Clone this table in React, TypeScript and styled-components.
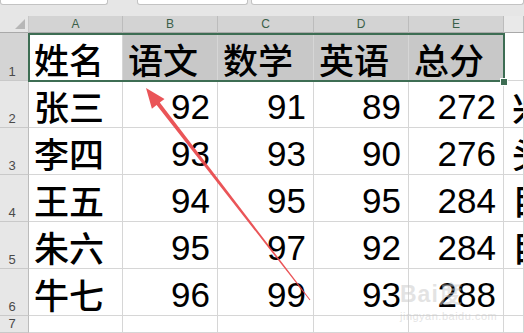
import React from "react";
import styled, { createGlobalStyle, css } from "styled-components";

const Global = createGlobalStyle`
  html, body { margin: 0; padding: 0; background: #ffffff; overflow: hidden; }
  #root { width: 524px; height: 333px; }
`;

const Page = styled.div`
  position: relative;
  width: 524px;
  height: 333px;
  overflow: hidden;
  display: flex;
  flex-direction: column;
  background: #ffffff;
`;

const TopStrip = styled.div`
  height: 16px;
  flex: none;
  background: #e6e6e6;
  display: flex;
  align-items: flex-start;
`;

const Field = styled.div<{ $w?: number; $ml?: number }>`
  height: 4px;
  width: ${(p) => (p.$w ? `${p.$w}px` : "auto")};
  flex: ${(p) => (p.$w ? "none" : "1")};
  margin-left: ${(p) => p.$ml ?? 0}px;
  background: #ffffff;
  border: 1px solid #c3c3c3;
  border-top: none;
  border-radius: 0 0 3px 3px;
`;

const Sheet = styled.div`
  position: relative;
  flex: 1;
  display: grid;
  grid-template-columns: 29px 94px 95px 96px 95px 95px 1fr;
  grid-template-rows: 17px 48px repeat(5, 47px) 1fr;
`;

const Corner = styled.div`
  background: #e6e6e6;
  border-right: 1px solid #c8c8c8;
  border-bottom: 1px solid #a9a9a9;
  display: flex;
  justify-content: flex-end;
  align-items: flex-end;
  padding: 0 3px 3px 0;
`;

const Triangle = styled.span`
  width: 0;
  height: 0;
  border-left: 10px solid transparent;
  border-bottom: 10px solid #b7b7b7;
`;

const ColHeader = styled.div<{ $sel?: boolean }>`
  background: ${(p) => (p.$sel ? "#d3d3d3" : "#e9e9e9")};
  color: ${(p) => (p.$sel ? "#3a5f49" : "#444444")};
  border-right: 1px solid #bcbcbc;
  border-bottom: 1px solid #a9a9a9;
  font-family: "Liberation Sans", Arial, sans-serif;
  font-size: 12px;
  display: flex;
  align-items: flex-end;
  justify-content: center;
  padding-bottom: 1px;
`;

const RowHeader = styled.div<{ $sel?: boolean }>`
  background: ${(p) => (p.$sel ? "#d4d4d4" : "#e7e7e7")};
  color: #4a4a4a;
  border-right: 1px solid #bcbcbc;
  border-bottom: 1px solid #c9c9c9;
  font-family: "Liberation Sans", Arial, sans-serif;
  font-size: 13px;
  display: flex;
  align-items: flex-end;
  justify-content: center;
  padding-bottom: 2px;
  padding-right: 4px;
  overflow: hidden;
  line-height: 13px;
`;

const Cell = styled.div<{ $kind?: "text" | "num"; $shade?: boolean; $clip?: boolean }>`
  background: ${(p) => (p.$shade ? "#c8c8c8" : "#ffffff")};
  border-right: 1px solid #d6d6d6;
  border-bottom: 1px solid #d6d6d6;
  display: flex;
  align-items: flex-end;
  overflow: ${(p) => (p.$clip ? "hidden" : "visible")};
  white-space: nowrap;
  color: #000000;
  ${(p) =>
    p.$kind === "num"
      ? css`
          justify-content: flex-end;
          font-family: "Liberation Sans", Arial, sans-serif;
          font-size: 35px;
          line-height: 40px;
          padding: 0 7px 0 0;
        `
      : css`
          justify-content: flex-start;
          font-family: "Noto Sans CJK SC", "Liberation Sans", sans-serif;
          font-weight: 500;
          font-size: 35px;
          line-height: 42px;
          padding: 0 0 0 ${p.$clip ? 8 : 5}px;
        `}
`;

const Selection = styled.div`
  position: absolute;
  left: 28px;
  top: 17px;
  width: 477px;
  height: 49px;
  box-sizing: border-box;
  border: 2px solid #3d6d53;
  pointer-events: none;
`;

const Handle = styled.div`
  position: absolute;
  left: 501px;
  top: 63px;
  width: 6px;
  height: 6px;
  background: #3d6d53;
  box-shadow: 0 0 0 1px #ffffff;
`;

const Watermark = styled.div`
  position: absolute;
  left: 400px;
  top: 281px;
  display: flex;
  flex-direction: column;
  align-items: flex-start;
  color: rgba(200, 200, 200, 0.5);
  font-family: "Liberation Sans", Arial, sans-serif;
  pointer-events: none;
`;

const WmBig = styled.span`
  font-size: 23px;
  font-weight: 700;
  line-height: 26px;
  letter-spacing: 1px;
`;

const WmSmall = styled.span`
  margin-top: 3px;
  font-size: 11px;
  line-height: 12px;
  letter-spacing: 0.5px;
`;

const ArrowLayer = styled.svg`
  position: absolute;
  left: 0;
  top: 0;
  width: 524px;
  height: 333px;
  pointer-events: none;
`;

type Row = { name: string; scores: number[]; extra: string };

const rows: Row[] = [
  { name: "张三", scores: [92, 91, 89, 272], extra: "兴" },
  { name: "李四", scores: [93, 93, 90, 276], extra: "头" },
  { name: "王五", scores: [94, 95, 95, 284], extra: "目" },
  { name: "朱六", scores: [95, 97, 92, 284], extra: "目" },
  { name: "牛七", scores: [96, 99, 93, 288], extra: "" },
];

const headers = ["语文", "数学", "英语", "总分"];
const cols = ["A", "B", "C", "D", "E"];

export default function App() {
  return (
    <Page>
      <Global />
      <TopStrip>
        <Field $w={106} />
        <Field $w={109} $ml={29} />
        <Field $ml={3} />
      </TopStrip>
      <Sheet>
        <Corner>
          <Triangle />
        </Corner>
        {cols.map((c) => (
          <ColHeader key={c} $sel>
            {c}
          </ColHeader>
        ))}
        <ColHeader />

        <RowHeader $sel>1</RowHeader>
        <Cell $kind="text">姓名</Cell>
        {headers.map((h) => (
          <Cell key={h} $kind="text" $shade>
            {h}
          </Cell>
        ))}
        <Cell $kind="text" />

        {rows.map((r, i) => (
          <React.Fragment key={r.name}>
            <RowHeader>{i + 2}</RowHeader>
            <Cell $kind="text">{r.name}</Cell>
            {r.scores.map((s, j) => (
              <Cell key={j} $kind="num">
                {s}
              </Cell>
            ))}
            <Cell $kind="text" $clip>
              {r.extra}
            </Cell>
          </React.Fragment>
        ))}

        <RowHeader>7</RowHeader>
        {[0, 1, 2, 3, 4, 5].map((k) => (
          <Cell key={k} />
        ))}

        <Selection />
        <Handle />
      </Sheet>

      <Watermark>
        <WmBig>Bai度</WmBig>
        <WmSmall>jingyan.baidu.com</WmSmall>
      </Watermark>

      <ArrowLayer viewBox="0 0 524 333">
        <polygon
          points="146,88 164.5,98.9 159.8,102.6 310.4,299.7 309.6,300.3 156.6,105 151.9,108.7"
          fill="#e8474a"
          fillOpacity="0.92"
        />
      </ArrowLayer>
    </Page>
  );
}
